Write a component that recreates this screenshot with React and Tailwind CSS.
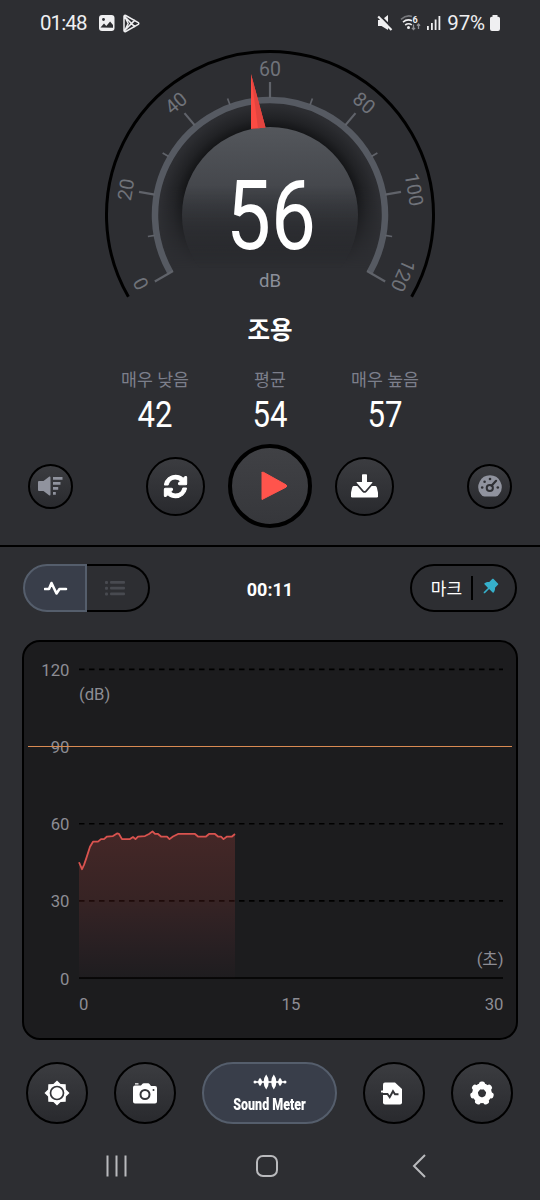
import { FaSyncAlt } from "react-icons/fa";
import { AiFillPushpin } from "react-icons/ai";

const CX = 270;
const CY = 169;

// value on the dial -> degrees from 12 o'clock
const dialAngle = (value) => value * 2 - 120;

// the end labels sit slightly inside the arc
const labels = [
  { value: 0, angle: -118 },
  { value: 20, angle: -80 },
  { value: 40, angle: -40 },
  { value: 60, angle: 0 },
  { value: 80, angle: 40 },
  { value: 100, angle: 80 },
  { value: 120, angle: 114.5 },
];

const polar = (deg, r) => {
  const a = (deg * Math.PI) / 180;
  return [CX + r * Math.sin(a), CY - r * Math.cos(a)];
};

const arc = (r, from, to) => {
  const [x1, y1] = polar(from, r);
  const [x2, y2] = polar(to, r);
  return `M${x1} ${y1}A${r} ${r} 0 1 1 ${x2} ${y2}`;
};

// [px from the y axis, dB]
const samples = [
  [0, 45], [3, 42.3], [5, 44], [7.5, 46.8], [11, 51], [14, 53], [19, 53],
  [22, 54], [25, 54], [28, 55], [34, 55.2], [38, 56.2], [40, 56], [43, 54],
  [51, 54], [54, 54.8], [56.5, 54], [59, 55], [66, 55.2], [70, 56],
  [73.5, 57], [76, 56], [79, 56], [82, 55], [88, 55], [90.5, 54], [94, 55],
  [99, 56], [116, 56], [119, 55], [127, 55], [130, 56], [136, 56],
  [139, 55], [142, 55], [144.5, 54], [148, 55], [153, 55], [156, 56],
];

function StatusBar() {
  return (
    <div className="flex h-[46px] shrink-0 items-center justify-between pl-10 pr-[39px] text-[#efeff1]">
      <div className="flex items-center">
        <span className="w-[57px] text-[20.5px] tracking-[-0.9px]">01:48</span>
        <svg width="18" height="18" viewBox="0 0 18 18" className="mr-[7px] ml-px">
          <rect x="1" y="1" width="15.5" height="16" rx="3" fill="#efeff1" />
          <circle cx="5.5" cy="5.5" r="1.4" fill="#2d2e32" />
          <path d="M2.5 13.5 6 9.5l2.3 2.4 3.8-4.4 2.9 3.6v2.6z" fill="#2d2e32" />
        </svg>
        <svg width="17" height="19" viewBox="0 0 17 19" fill="none" stroke="#efeff1" strokeWidth="1.5" strokeLinejoin="round" strokeLinecap="round">
          <path d="M1 2.2v14.6q.4 1.4 1.7.7l12.6-7.1q1-.9 0-1.8L2.7 1.5Q1.4.8 1 2.2zM1.3 16.8 11.6 6.4M1.3 2.2l10.3 10.4M1.5 2l3.7 7.5L1.5 17" />
        </svg>
      </div>
      <div className="flex items-center">
        <svg width="16" height="18" viewBox="0 0 16 18" className="mr-[7px]">
          <path d="M1 6h3.5L11 1v15l-6.500-4H1z" fill="#efeff1" />
          <path d="M2.500 1 15.500 14.500" stroke="#2d2e32" strokeWidth="2.200" />
          <path d="M1.200 2.500 14.500 16" stroke="#efeff1" strokeWidth="2.200" />
        </svg>
        <svg width="23" height="18" viewBox="0 0 23 18" className="mr-[3px]" fill="none">
          <path d="M1 5.300Q6.500 .5 12 2.500" stroke="#77787c" strokeWidth="1.600" />
          <path d="M3 8.200q4-3.600 9-1.500M5.200 11q3.200-2.500 6.600-.2" stroke="#efeff1" strokeWidth="1.600" />
          <circle cx="8.500" cy="13.400" r="1.500" fill="#efeff1" />
          <text x="12.500" y="8.500" fontSize="9" fontWeight="700" fill="#efeff1">6</text>
          <path d="M13.500 10.500v5m-1.600-1.600 1.600 1.600 1.600-1.600M18.500 15v-5m-1.600 1.600 1.600-1.600 1.600 1.600" stroke="#909195" strokeWidth="1.300" />
        </svg>
        <svg width="16" height="16" viewBox="0 0 16 16" className="mr-[5px]" fill="#efeff1">
          <rect x="1" y="11" width="1.800" height="4" />
          <rect x="5" y="8" width="1.800" height="7" />
          <rect x="8.700" y="4.500" width="1.800" height="10.500" />
          <rect x="12.500" y="1" width="1.800" height="14" />
        </svg>
        <span className="mr-1 text-[20.5px] tracking-[-0.1px]">97%</span>
        <svg width="12" height="18" viewBox="0 0 12 18" fill="#efeff1">
          <path d="M3.500 1h5v1.700h.8q1.700 0 1.700 1.700V15q0 2-2 2H3q-2 0-2-2V4.400q0-1.700 1.700-1.700h.8z" />
        </svg>
      </div>
    </div>
  );
}

function Gauge() {
  const ticks = Array.from({ length: 13 }, (_, i) => i * 10);

  return (
    <svg width="540" height="264" viewBox="0 0 540 264" className="block shrink-0">
      <defs>
        <linearGradient id="knob" x1="0" y1="0" x2="0" y2="1">
          <stop offset="0" stopColor="#54575c" />
          <stop offset="0.45" stopColor="#404247" />
          <stop offset="0.85" stopColor="#2d2e32" />
        </linearGradient>
        <radialGradient id="halo" gradientUnits="userSpaceOnUse" cx={CX} cy={CY} r="110">
          <stop offset="0.79" stopColor="#131416" />
          <stop offset="0.88" stopColor="#212225" />
          <stop offset="1" stopColor="#2d2e32" />
        </radialGradient>
        <linearGradient id="fade" gradientUnits="userSpaceOnUse" x1="0" y1="140" x2="0" y2="222">
          <stop offset="0" stopColor="#fff" />
          <stop offset="1" stopColor="#000" />
        </linearGradient>
        <mask id="haloMask">
          <rect width="540" height="264" fill="url(#fade)" />
        </mask>
      </defs>

      <circle cx={CX} cy={CY} r="110" fill="url(#halo)" mask="url(#haloMask)" />
      <path d={arc(163.500, -120, 120)} fill="none" stroke="#000" strokeWidth="3" />
      <path d={arc(115, -120, 120)} fill="none" stroke="#565a62" strokeWidth="6.500" />

      {ticks.map((v) => {
        const major = v % 20 === 0;
        const [x1, y1] = polar(dialAngle(v), v === 0 || v === 120 ? 112 : 117);
        const [x2, y2] = polar(dialAngle(v), major ? 133 : 124);
        return (
          <line key={v} x1={x1} y1={y1} x2={x2} y2={y2} stroke="#60636a" strokeWidth={major ? 2.200 : 1.700} />
        );
      })}

      {labels.map(({ value, angle }) => (
        <text
          key={value}
          x={CX}
          y="29.500"
          textAnchor="middle"
          fontSize="19.500"
          fill="#70737a"
          transform={`rotate(${angle} ${CX} ${CY})`}
        >
          {value}
        </text>
      ))}

      <circle cx={CX} cy={CY} r="88" fill="url(#knob)" mask="url(#haloMask)" />
      <path d="M251 28 265.500 81.500 251 83z" fill="#fb4b43" />
      <path d="M251 28 265.500 81.500 258 82.300z" fill="#e2443f" />

      <text x="226" y="203" fontSize="96" fill="#fff" textLength="90" lengthAdjust="spacingAndGlyphs">
        56
      </text>
      <text x={CX} y="241" textAnchor="middle" fontSize="19" fill="#8b8f9a" textLength="22" lengthAdjust="spacingAndGlyphs">
        dB
      </text>
    </svg>
  );
}

function Stat({ label, value }) {
  return (
    <div className="flex w-[115px] flex-col items-center">
      <span className="text-[17.3px] leading-6 whitespace-nowrap text-[#7c7f8b]">{label}</span>
      <svg width="44" height="46" viewBox="0 0 44 46">
        <text x="4.500" y="35" fontSize="36" fill="#fff" textLength="35" lengthAdjust="spacingAndGlyphs">
          {value}
        </text>
      </svg>
    </div>
  );
}

function RoundButton({ className, children }) {
  return (
    <button
      className={`flex shrink-0 items-center justify-center rounded-full border-black bg-linear-to-b from-[#3b3c40] to-[#292a2e] ${className}`}
    >
      {children}
    </button>
  );
}

function Controls() {
  return (
    <div className="flex h-[84px] shrink-0 items-center justify-between px-7">
      <RoundButton className="size-[45px] border-2">
        <svg width="25" height="20" viewBox="0 0 25 20" fill="#90939e">
          <path d="M0 6q0-1 1-1h4.500L11 .7Q12.500 0 12.500 1.500v17q0 1.500-1.500.8L5.500 15H1q-1 0-1-1z" />
          <path d="M15 1h9.500v2.800H15zM15 6h7.500v2.800H15zM15 11h5.200v2.800H15zM15 16h2.800v2.800H15z" />
        </svg>
      </RoundButton>
      <div className="flex items-center gap-[23px]">
        <RoundButton className="size-[59px] border-2">
          <FaSyncAlt className="size-[23px] overflow-visible stroke-white stroke-[24px] text-white" />
        </RoundButton>
        <RoundButton className="size-[84px] border-4 from-[#404145]! to-[#36373b]!">
          <svg width="30" height="30" viewBox="0 0 30 30" className="ml-[7px]">
            <path d="M3 1.500v27l24-12.300q1.500-1.200 0-2.400L4.500 1.300Q3 .6 3 2z" fill="#ff544c" stroke="#ff544c" strokeLinejoin="round" />
          </svg>
        </RoundButton>
        <RoundButton className="size-[59px] border-2">
          <svg width="27" height="24" viewBox="0 0 27 24" className="mb-px">
            <path d="M2.500 12H24.500q.8 0 1.300 1.500L27 18.500v3.700q0 1.300-1.300 1.300H1.300Q0 23.500 0 22.200v-3.700l1.200-5Q1.700 12 2.500 12z" fill="#fff" />
            <path d="M11 1q0-.8.8-.8h3.400q.8 0 .8.800V8h5q.8 0 .3.700l-7 8q-.8.700-1.600 0l-7-8Q5.200 8 6 8h5z" fill="#fff" stroke="#333438" strokeWidth="3.400" paintOrder="stroke" />
          </svg>
        </RoundButton>
      </div>
      <RoundButton className="size-[45px] border-2">
        <svg width="24" height="22" viewBox="0 0 24 22">
          <path d="M12 .3a11.700 11.700 0 0 1 9.500 18.500Q20 21.500 17.500 21.500h-11Q4 21.500 2.500 18.800A11.700 11.700 0 0 1 12 .3z" fill="#90939e" />
          <g fill="#2f3034">
            <circle cx="12" cy="4" r="1.300" />
            <circle cx="6.600" cy="6.800" r="1.300" />
            <circle cx="4.200" cy="12.500" r="1.300" />
            <circle cx="19.800" cy="12.500" r="1.300" />
          </g>
          <circle cx="11.800" cy="13" r="3.100" fill="none" stroke="#2f3034" strokeWidth="2" />
          <path d="m13.500 10.800 4.600-5" stroke="#2f3034" strokeWidth="2.200" strokeLinecap="round" />
        </svg>
      </RoundButton>
    </div>
  );
}

function Toolbar() {
  return (
    <div className="mt-[17px] flex h-12 shrink-0 items-center justify-between pr-[22.5px] pl-[22.5px]">
      <div className="flex h-12 w-[127px]">
        <button className="flex w-[64.5px] items-center justify-center rounded-l-full border-2 border-[#555e6c] bg-[#393e4a]">
          <svg width="24" height="17" viewBox="0 0 24 17" className="ml-0.5">
            <path d="M1 9h4L7.500 3l5 10.500L15.500 9H22" fill="none" stroke="#fff" strokeWidth="2.600" strokeLinejoin="round" strokeLinecap="round" />
          </svg>
        </button>
        <button className="flex flex-1 items-center justify-center rounded-r-full border-2 border-l-0 border-black">
          <svg width="20" height="15" viewBox="0 0 20 15" fill="#484a50" className="mr-1">
            {[0, 5.700, 11.400].map((y) => (
              <g key={y}>
                <rect x="0" y={y} width="3" height="3" rx="1" />
                <rect x="5" y={y} width="15" height="2.800" rx="1" />
              </g>
            ))}
          </svg>
        </button>
      </div>
      <span className="mt-0.5 mr-5 text-[18px] font-bold text-white">00:11</span>
      <button className="flex h-12 w-[107px] items-center rounded-full border-2 border-black pl-[18px]">
        <span className="mt-1 w-8 text-[17px] whitespace-nowrap text-white">마크</span>
        <span className="ml-[9px] h-6 w-[1.5px] bg-black" />
        <AiFillPushpin className="mb-1 ml-2 size-[20px] text-[#36b0cb]" />
      </button>
    </div>
  );
}

function Chart() {
  const left = 56;
  const right = 480;
  const y = (db) => 338 - db * 2.572;
  const line = samples.map(([x, db]) => `${left + x},${y(db)}`).join(" ");

  return (
    <div className="mx-[22px] mt-7 h-[400px] shrink-0 overflow-hidden rounded-[18px] border-2 border-black bg-[#1c1c1e]">
      <svg width="492" height="396" viewBox="1 2 492 396" fontSize="16.700" fill="#8d8d94" className="block">
        <defs>
          <linearGradient id="area" x1="0" y1="0" x2="0" y2="1">
            <stop offset="0" stopColor="#ff5a50" stopOpacity="0.18" />
            <stop offset="0.45" stopColor="#ff5a50" stopOpacity="0.12" />
            <stop offset="1" stopColor="#ff5a80" stopOpacity="0.01" />
          </linearGradient>
        </defs>

        {[120, 90, 60, 30, 0].map((db) => (
          <text key={db} x="46.500" y={y(db) + 6.500} textAnchor="end">
            {db}
          </text>
        ))}
        <text x="56" y="60">(dB)</text>
        <text x="480.500" y="325" textAnchor="end">(초)</text>
        <text x="56" y="370">0</text>
        <text x="268" y="370" textAnchor="middle">15</text>
        <text x="480.500" y="370" textAnchor="end">30</text>

        {[120, 60, 30].map((db) => (
          <line key={db} x1={left} x2={right} y1={y(db)} y2={y(db)} stroke="#000" strokeWidth="1.600" strokeDasharray="5.500 4.500" />
        ))}
        <line x1={left} x2={right} y1={y(0)} y2={y(0)} stroke="#000" strokeWidth="1.500" />

        <polygon points={`${left},${y(0)} ${line} ${left + 156},${y(0)}`} fill="url(#area)" />
        <polyline points={line} fill="none" stroke="#d9534f" strokeWidth="1.800" strokeLinejoin="round" />

        {/* warning level */}
        <rect x="5" y="106" width="484" height="1" fill="#d98a52" />
      </svg>
    </div>
  );
}

function BottomTabs() {
  return (
    <div className="mt-[22px] flex h-[62px] shrink-0 items-center justify-between pr-[27px] pl-[26px]">
      <RoundButton className="size-[62px] border-2">
        <svg width="26" height="26" viewBox="0 0 26 26">
          <path d="m13 .5 3.600 3.600 5.100.200.200 5.100L25.500 13l-3.600 3.600-.2 5.100-5.100.2L13 25.500l-3.600-3.600-5.100-.2-.2-5.100L.5 13l3.600-3.600.2-5.100 5.100-.2z" fill="#fff" />
          <circle cx="13" cy="13" r="6.500" fill="#fff" stroke="#343539" strokeWidth="1.700" />
        </svg>
      </RoundButton>
      <RoundButton className="size-[62px] border-2">
        <svg width="24" height="21" viewBox="0 0 24 21">
          <path d="M2 .3h3.500v1.200H2zM2 2.500h6L9.500.8q.5-.5 1.300-.5h4.400q.8 0 1.300.7l1.500 2H22q2 0 2 2v13.500q0 2-2 2H2q-2 0-2-2V4.500q0-2 2-2z" fill="#fff" />
          <circle cx="12" cy="11.500" r="4.500" fill="none" stroke="#343539" strokeWidth="2" />
          <circle cx="20.500" cy="7" r="1" fill="#343539" />
        </svg>
      </RoundButton>
      <button className="flex h-[62px] w-[135px] flex-col items-center rounded-full border-2 border-[#555e6c] bg-[#393e4a] pt-2.5">
        <svg width="34" height="16" viewBox="0 0 34 16" fill="#fff">
          <path d="M1 7.200h32v1.600H1z" />
          <circle cx="2" cy="8" r="1.500" />
          <circle cx="32" cy="8" r="1.500" />
          <path d="M7 3.800q2 1.700 2.200 4.200-.2 2.500-2.200 4.200Q5.200 10.500 5 8q.2-2.500 2-4.200zM27 3.800q2 1.700 2.200 4.200-.2 2.500-2.200 4.200Q25.200 10.500 25 8q.2-2.500 2-4.200z" />
          <path d="M13.200.5q2.600 3.200 2.600 7.500t-2.600 7.500Q10.600 12.300 10.600 8t2.600-7.500zM20.800.5q2.600 3.200 2.600 7.500t-2.600 7.500q-2.600-3.200-2.600-7.500t2.600-7.500z" />
        </svg>
        <span className="mt-[3px] scale-x-[0.78] text-[16px] leading-6 font-black whitespace-nowrap text-white">
          Sound Meter
        </span>
      </button>
      <RoundButton className="size-[62px] border-2">
        <svg width="22" height="23" viewBox="0 0 22 23" className="mr-1">
          <path d="M4 .5h10L21 7v13.500q0 2-2 2H4q-2 0-2-2v-18q0-2 2-2z" fill="#fff" />
          <path d="M0 12h6.500l2.200 3.200 3.300-6 2 3h3.500" fill="none" stroke="#343539" strokeWidth="1.900" />
          <path d="M.8 9.500h7" stroke="#fff" strokeWidth="2" strokeLinecap="round" />
        </svg>
      </RoundButton>
      <RoundButton className="size-[62px] border-2">
        <svg width="24" height="24" viewBox="0 0 24 24">
          {Array.from({ length: 7 }, (_, i) => (
            <rect key={i} x="9" y="0.500" width="6" height="8" rx="2.500" fill="#fff" transform={`rotate(${(i * 360) / 7} 12 12.300)`} />
          ))}
          <circle cx="12" cy="12.300" r="7.100" fill="none" stroke="#fff" strokeWidth="5.800" />
        </svg>
      </RoundButton>
    </div>
  );
}

function SystemNav() {
  return (
    <div className="flex flex-1 items-center pt-2 pl-[105px] text-[#b9babd]">
      <svg width="24" height="24" viewBox="0 0 24 24" stroke="currentColor" strokeWidth="2">
        <path d="M2.500 1.500v21M11.500 1.500v21M20.500 1.500v21" />
      </svg>
      <svg width="24" height="24" viewBox="0 0 24 24" fill="none" stroke="currentColor" strokeWidth="2" className="ml-[126px]">
        <rect x="2" y="2" width="20" height="20" rx="6" />
      </svg>
      <svg width="16" height="26" viewBox="0 0 16 26" fill="none" stroke="currentColor" strokeWidth="2" className="ml-[132px]">
        <path d="M14 2 3 13l11 11" />
      </svg>
    </div>
  );
}

export default function App() {
  return (
    <div className="flex h-[1200px] w-[540px] flex-col overflow-hidden bg-[#2d2e32] font-['Roboto','Noto_Sans_CJK_KR',sans-serif]">
      <StatusBar />
      <Gauge />
      <h1 className="mt-[5px] text-center text-[24.5px] leading-8 font-bold text-white">조용</h1>
      <div className="mt-[21px] flex h-[76px] shrink-0 justify-center">
        <Stat label="매우 낮음" value="42" />
        <Stat label="평균" value="54" />
        <Stat label="매우 높음" value="57" />
      </div>
      <Controls />
      <div className="mt-[17px] h-[2px] shrink-0 bg-black" />
      <Toolbar />
      <Chart />
      <BottomTabs />
      <SystemNav />
    </div>
  );
}
